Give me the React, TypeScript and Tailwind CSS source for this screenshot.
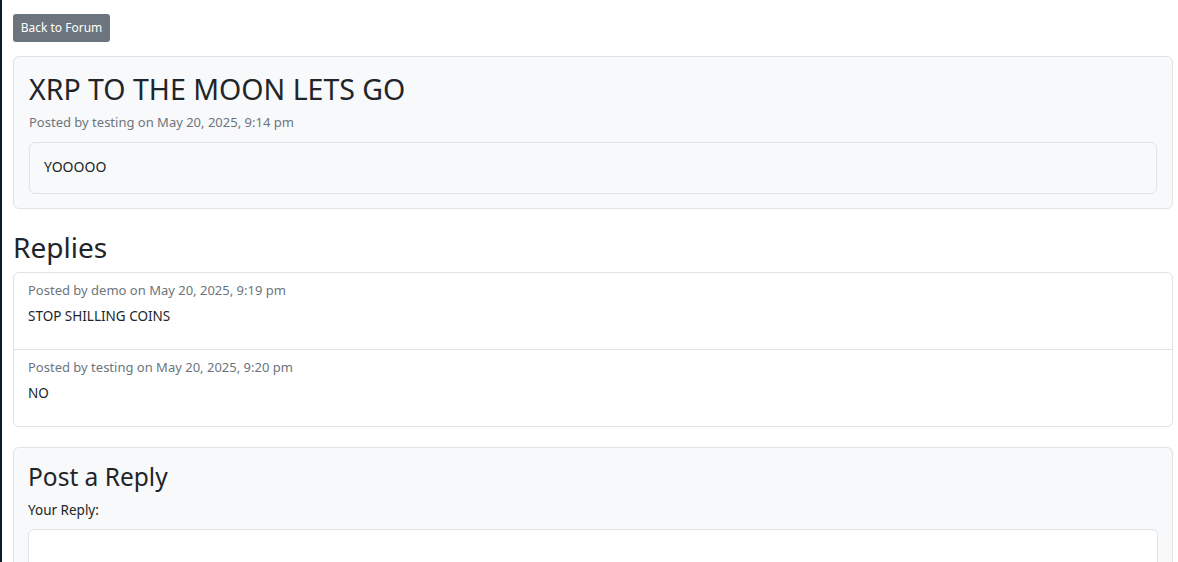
import React from 'react';

const replies = [
  { author: 'demo', date: 'May 20, 2025, 9:19 pm', body: 'STOP SHILLING COINS' },
  { author: 'testing', date: 'May 20, 2025, 9:20 pm', body: 'NO' },
];

export default function App() {
  return (
    <div className="min-h-screen flex bg-white text-[#212529] font-['Noto_Sans',sans-serif]">
      {/* dark page background peeking out on the left */}
      <div className="w-[2px] shrink-0 bg-[#0a1d2c]" />

      <div className="flex-1 pl-[11px] pr-[5px] pt-[14px]">
        <button className="h-[28px] w-[97px] rounded-[3px] bg-[#6c757d] text-white text-[12px] leading-none">
          Back to Forum
        </button>

        {/* Topic */}
        <div className="mt-[14px] rounded-md border border-[#dfe2e6] bg-[#f8f9fa] px-[15px] pt-[15px] pb-[14px]">
          <h3 className="text-[28.5px] leading-[1.2] mb-[6px]">XRP TO THE MOON LETS GO</h3>
          <p className="text-[13px] leading-[21px] text-[#6c757d] mb-[9px]">
            Posted by testing on May 20, 2025, 9:14 pm
          </p>
          <div className="rounded-md border border-[#dfe2e6] bg-[#f8f9fa] px-[14px] pt-[13px] pb-[16px] text-[14px] leading-[21px]">
            YOOOOO
          </div>
        </div>

        {/* Replies */}
        <h3 className="mt-[22px] mb-[7px] text-[28px] leading-[1.2]">Replies</h3>
        <div className="rounded-md border border-[#dfe2e6] bg-white">
          {replies.map((r, i) => (
            <div
              key={i}
              className={`px-[14px] pt-[7px] pb-[22px] ${i > 0 ? 'border-t border-[#dfe2e6]' : ''}`}
            >
              <p className="text-[13px] leading-[21px] text-[#6c757d] mb-[5px]">
                Posted by {r.author} on {r.date}
              </p>
              <p className="text-[13.5px] leading-[21px]">{r.body}</p>
            </div>
          ))}
        </div>

        {/* Post a reply */}
        <div className="mt-[20px] rounded-t-md border border-b-0 border-[#dfe2e6] bg-[#f8f9fa] px-[14px] pt-[14px] h-[200px]">
          <h4 className="text-[24.5px] leading-[1.2] mb-[9px]">Post a Reply</h4>
          <label className="block text-[13.5px] leading-[21px] mb-[8px]">Your Reply:</label>
          <textarea className="block w-full h-[100px] rounded-md border border-[#dfe2e6] bg-white resize-none" />
        </div>
      </div>
    </div>
  );
}
